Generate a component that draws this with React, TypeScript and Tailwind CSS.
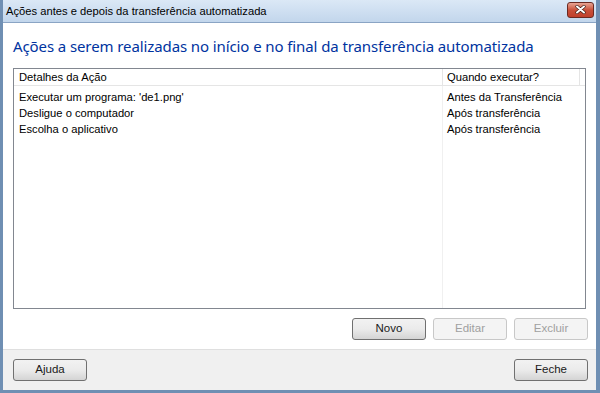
import React from "react";

const rows = [
  ["Executar um programa: 'de1.png'", "Antes da Transferência"],
  ["Desligue o computador", "Após transferência"],
  ["Escolha o aplicativo", "Após transferência"],
];

function Btn({ label, disabled }: { label: string; disabled?: boolean }) {
  return (
    <button
      className={
        disabled
          ? "w-[74px] h-[22px] rounded-[3px] border border-[#c8c8c8] bg-[#f4f4f4] text-[11.5px] text-[#a0a0a0] flex items-center justify-center"
          : "w-[74px] h-[22px] rounded-[3px] border border-[#707070] bg-gradient-to-b from-[#f2f2f2] via-[#ebebeb] to-[#d4d4d4] text-[11.5px] text-[#1a1a1a] flex items-center justify-center"
      }
      style={{ fontFamily: "'Liberation Sans', Arial, sans-serif" }}
    >
      {label}
    </button>
  );
}

export default function App() {
  return (
    <div
      className="w-[600px] h-[393px] flex flex-col bg-[#b9d1ea] border-l-[3px] border-r-[4px] border-b-[3px] border-[#6f8fb3] overflow-hidden"
      style={{ fontFamily: "'Liberation Sans', Arial, sans-serif" }}
    >
      <div className="h-[22px] shrink-0 flex items-center justify-between bg-gradient-to-b from-[#dbe8f6] to-[#c2d6ec] pl-[3px] pr-[2px]">
        <span className="text-[11.2px] text-black pt-[1px]">
          Ações antes e depois da transferência automatizada
        </span>
        <div className="w-[27px] h-[16px] mb-[3px] rounded-[3px] border border-[#6b2a22] bg-gradient-to-b from-[#e8a493] via-[#c9503a] to-[#c0402c] flex items-center justify-center">
          <svg width="11" height="9" viewBox="0 0 11 9">
            <path d="M2 1.5 L9 7.5 M9 1.5 L2 7.5" stroke="#3a1a14" strokeWidth="3.2" strokeLinecap="round" />
            <path d="M2 1.5 L9 7.5 M9 1.5 L2 7.5" stroke="#ffffff" strokeWidth="2" strokeLinecap="round" />
          </svg>
        </div>
      </div>
      <div className="flex-1 flex flex-col bg-white border-t border-[#8aa4c4]">
        <div className="flex-1 flex flex-col px-[10px]">
          <div
            className="h-[45px] flex items-center text-[15px] text-[#0033a0] tracking-[-0.1px] pt-[1px]"
            style={{ fontFamily: "'Noto Sans', 'Open Sans', sans-serif" }}
          >
            Ações a serem realizadas no início e no final da transferência automatizada
          </div>
          <div className="h-[241px] border border-[#828790] flex flex-col text-[11.2px] text-black">
            <div className="h-[17px] flex border-b border-[#e5e5e5] bg-white">
              <div className="w-[429px] border-r border-[#e5e5e5] pl-[5px] flex items-center">Detalhes da Ação</div>
              <div className="w-[137px] border-r border-[#e5e5e5] pl-[4px] flex items-center">Quando executar?</div>
            </div>
            <div className="flex-1 flex">
              <div className="w-[429px] border-r border-[#f0f0f0] pt-[3px]">
                {rows.map((r) => (
                  <div key={r[0]} className="h-[16px] pl-[5px] flex items-center">{r[0]}</div>
                ))}
              </div>
              <div className="w-[137px] pt-[3px]">
                {rows.map((r, i) => (
                  <div key={i} className="h-[16px] pl-[4px] flex items-center">{r[1]}</div>
                ))}
              </div>
            </div>
          </div>
          <div className="flex justify-end gap-[7px] mt-[9px] -mr-[2px]">
            <Btn label="Novo" />
            <Btn label="Editar" disabled />
            <Btn label="Excluir" disabled />
          </div>
        </div>
        <div className="h-[41px] shrink-0 bg-[#f0f0f0] border-t border-[#dfdfdf] flex items-center justify-between pl-[10px] pr-[8px] pb-[1px]">
          <Btn label="Ajuda" />
          <Btn label="Feche" />
        </div>
      </div>
    </div>
  );
}
